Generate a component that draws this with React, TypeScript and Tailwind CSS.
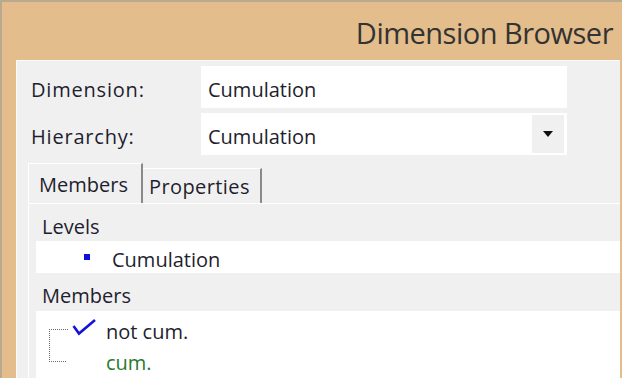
const font = { fontFamily: '"Open Sans", "Noto Sans", sans-serif' };

function Field({ label, value, dropdown }: { label: string; value: string; dropdown?: boolean }) {
  return (
    <div className="flex items-center h-[42px]">
      <div className="w-[184px] pl-[14px] pt-[6px] text-[20px] tracking-[0.8px] text-[#1e1e2e]">{label}</div>
      <div className="w-[366px] h-[42px] bg-white flex items-center pl-[7px] pr-[3px]">
        <span className="flex-1 pt-[6px] text-[20px] text-[#1e1e2e]">{value}</span>
        {dropdown && (
          <div className="w-[32px] h-[38px] bg-[#f0f0f0] flex items-center justify-center">
            <svg width="12" height="8" viewBox="0 0 12 8">
              <path d="M1 1h10L6 7z" fill="#111" />
            </svg>
          </div>
        )}
      </div>
    </div>
  );
}

export default function App() {
  return (
    <div
      className="w-[622px] h-[378px] overflow-hidden bg-[#e3bd8b] border-l-2 border-t-2 border-[#b9a992] flex flex-col"
      style={font}
    >
      {/* Title */}
      <div className="h-[60px] flex items-center justify-end pr-[9px] pt-[4px]">
        <span className="text-[29px] text-[#333] tracking-[-0.5px]">Dimension Browser</span>
      </div>

      {/* Content panel */}
      <div className="ml-[14px] mr-[2px] flex-1 bg-[#f0f0f0] border-t border-l border-[#fbfbfb] pt-[5px] flex flex-col">
        <div className="flex flex-col gap-[5px]">
          <Field label="Dimension:" value="Cumulation" />
          <Field label="Hierarchy:" value="Cumulation" dropdown />
        </div>

        {/* Tabs */}
        <div className="ml-[11px] mt-[8px] flex items-end h-[40px]">
          <div className="h-[40px] w-[115px] bg-[#f0f0f0] border-t border-l border-white border-r-2 border-r-[#8a8a8a] pl-[10px] pt-[6px] text-[20px] text-[#1e1e2e]">
            Members
          </div>
          <div className="h-[35px] w-[119px] bg-[#f0f0f0] border-t border-white border-r-2 border-r-[#8a8a8a] pl-[6px] pt-[3px] text-[20px] tracking-[0.4px] text-[#1e1e2e]">
            Properties
          </div>
        </div>

        {/* Tab page */}
        <div className="ml-[11px] flex-1 border-t border-l border-white pl-[7px] pt-[1px] flex flex-col">
          <div className="h-[36px] flex items-center pl-[6px] pt-[7px] text-[20px] text-[#1e1e2e]">Levels</div>
          <div className="h-[32px] bg-white flex items-center pl-[48px] gap-[22px]">
            <div className="w-[6px] h-[6px] bg-[#1010d8]" />
            <span className="pt-[5px] text-[20px] text-[#1e1e2e]">Cumulation</span>
          </div>
          <div className="h-[38px] flex items-center pl-[6px] pt-[8px] text-[20px] text-[#1e1e2e]">Members</div>
          <div className="flex-1 bg-white flex">
            <svg width="70" height="60" viewBox="0 0 70 60" className="shrink-0">
              <path d="M13 18.5 H32 M13.5 18 V51 M13 50.5 H30" stroke="#6a6a6a" strokeWidth="1" strokeDasharray="1 1" fill="none" />
              <path d="M37.5 15 L43 22.5 L59 9" stroke="#1414d4" strokeWidth="2.6" fill="none" strokeLinejoin="miter" />
            </svg>
            <div className="flex flex-col pt-[6px]">
              <span className="h-[31px] text-[20px] text-[#1e1e2e]">not cum.</span>
              <span className="text-[20px] text-[#2a7a2a]">cum.</span>
            </div>
          </div>
        </div>
      </div>
    </div>
  );
}
